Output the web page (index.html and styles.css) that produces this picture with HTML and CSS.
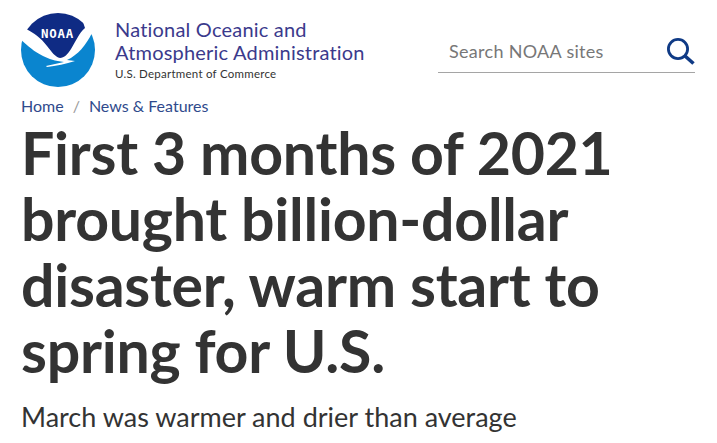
FILE: index.html
```html
<!DOCTYPE html>
<html lang="en">
<head>
<meta charset="utf-8">
<title>First 3 months of 2021</title>
<link rel="stylesheet" href="styles.css">
</head>
<body>
<header class="top">
  <div class="brand">
    <svg class="logo" width="74" height="74" viewBox="21 13 74 74" aria-hidden="true">
      <defs><clipPath id="disc"><circle cx="58" cy="50" r="37"/></clipPath></defs>
      <g clip-path="url(#disc)">
        <rect x="21" y="13" width="74" height="74" fill="#fff"/>
        <path d="M20 39 C27 45 34 52 43 56 C49 59 55 61 64 62 C58 63 52 65 46 66 L47 67 C56 66 66 64 75 61 L67 60 C78 55 86 45 92 33 L97 33 V90 H20 Z" fill="#0a85cf"/>
        <path d="M26 29 L36 13 H80 L85 28 C79 33 76 41 71 49 C68 54 64 58 60 58 C55 57 52 52 47 46 C41 38 34 33 26 29 Z" fill="#0f2b84"/>
      </g>
      <text x="57.5" y="37.5" class="logo-text">NOAA</text>
    </svg>
    <div class="brand-text">
      <div class="agency">National Oceanic and<br>Atmospheric Administration</div>
      <div class="dept">U.S. Department of Commerce</div>
    </div>
  </div>
  <div class="search">
    <span class="placeholder">Search NOAA sites</span>
    <svg width="30" height="30" viewBox="0 0 30 30" aria-hidden="true">
      <circle cx="12" cy="12" r="9.6" fill="none" stroke="#0f3a85" stroke-width="2.8"/>
      <path d="M19 19 L27.5 26.5" stroke="#0f3a85" stroke-width="3.6" fill="none"/>
    </svg>
  </div>
</header>
<nav class="crumbs"><a>Home</a><span class="sep">/</span><a>News &amp; Features</a></nav>
<h1>First 3 months of 2021 brought billion-dollar disaster, warm start to spring for U.S.</h1>
<p class="sub">March was warmer and drier than average</p>
</body>
</html>
```
FILE: styles.css
```css
html, body { margin: 0; padding: 0; background: #fff; overflow: hidden; height: 443px; }
body { font-family: "Lato", "Open Sans", sans-serif; color: #333; padding: 0 21px; box-sizing: border-box; }
.top { display: flex; justify-content: space-between; padding-top: 13px; height: 74px; padding-right: 1px; }
.brand { display: flex; gap: 20px; }
.logo { display: block; flex: none; }
.logo-text { font: 700 12.4px "DejaVu Sans Mono", monospace; fill: #fff; text-anchor: middle; letter-spacing: 0.8px; }
.brand-text { padding-top: 5px; }
.agency { font-size: 20px; line-height: 23px; color: #3b3a8c; letter-spacing: 0.2px; }
.dept { font-size: 11.5px; line-height: 14px; margin-top: 3px; color: #333; letter-spacing: 0.25px; }
.search { width: 257px; height: 45px; margin-top: 14px; border-bottom: 1px solid #a5a5a5; display: flex; justify-content: space-between; align-items: center; }
.placeholder { font-size: 18px; color: #777; margin-left: 11px; margin-top: 2px; letter-spacing: 0.3px; }
.search svg { margin-top: 4px; margin-right: -1px; }
.crumbs { font-size: 16px; line-height: 20px; margin-top: 9px; color: #2f4a8c; }
.sep { color: #999; margin: 0 9px; }
h1 { margin: 4px 0 0; font-size: 59px; line-height: 66px; font-weight: 700; color: #333; width: 640px; letter-spacing: -0.25px; }
.sub { margin: 17px 0 0; font-size: 27px; line-height: 32px; color: #333; }
```
